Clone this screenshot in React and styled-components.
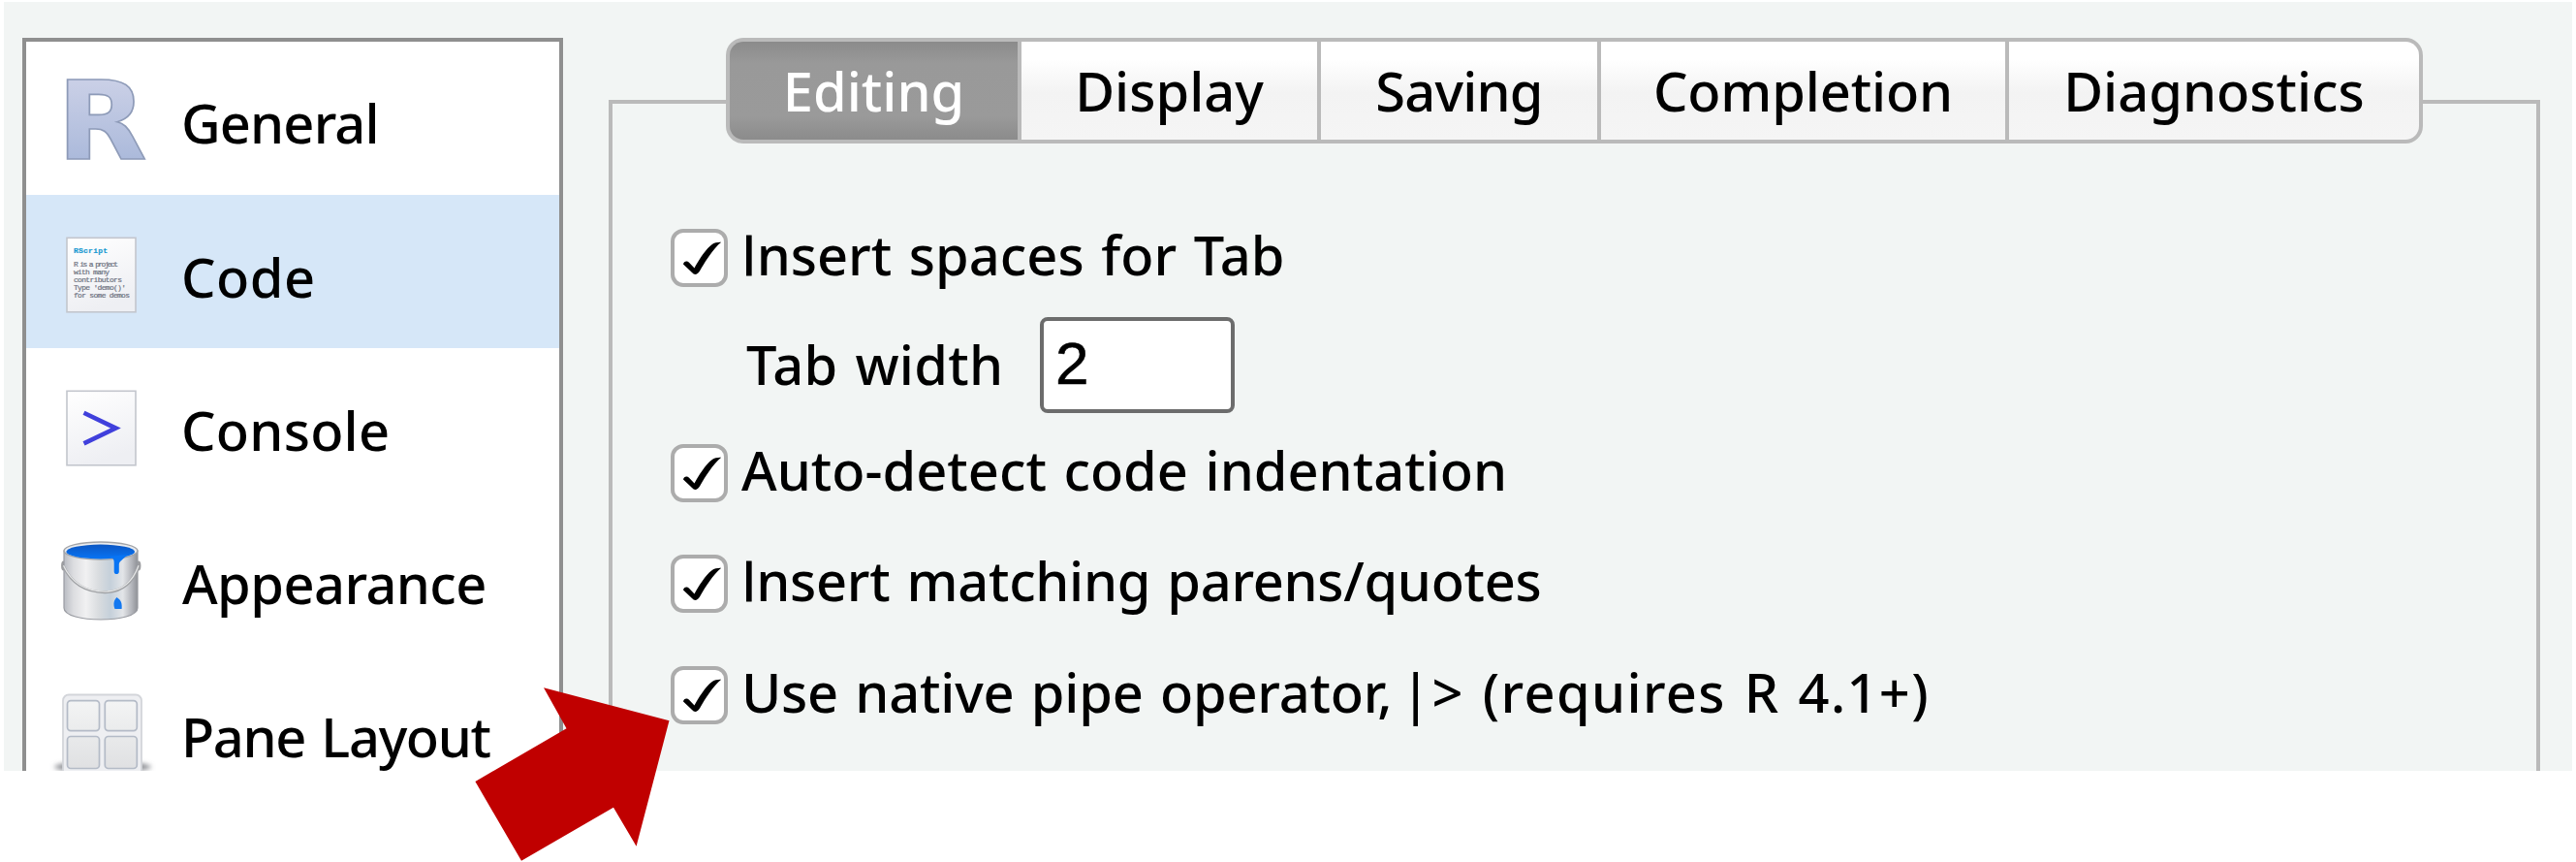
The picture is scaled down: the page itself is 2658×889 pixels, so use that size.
import React from 'react';
import styled, { createGlobalStyle, css } from 'styled-components';

const GlobalStyle = createGlobalStyle`
  * { box-sizing: border-box; }
  body { margin: 0; background: #fff; }
`;

const uiFont = css`
  font-family: 'Noto Sans', 'Open Sans', sans-serif;
  font-size: 56px;
  font-weight: 500;
  line-height: 60px;
  white-space: nowrap;
`;

const Page = styled.main`
  position: relative;
  width: 2658px;
  height: 889px;
  padding: 2px 4px 0;
  overflow: hidden;
  color: #000;
  ${uiFont}
`;

const Dialog = styled.div`
  display: flex;
  align-items: flex-start;
  width: 2650px;
  height: 793px;
  padding: 37px 33px 0 19px;
  background: #f2f5f4;
  overflow: hidden;
`;

const Sidebar = styled.nav`
  flex: none;
  width: 558px;
  height: 900px;
  border: 4px solid #8f8f8f;
  background: #fff;
`;

const SidebarItem = styled.div`
  display: flex;
  align-items: center;
  height: 158.2px;
  background: ${(p) => (p.$selected ? '#d6e7f8' : 'transparent')};

  svg {
    flex: none;
    display: block;
    width: 158px;
    height: 158.2px;
  }
`;

const Label = styled.span`
  letter-spacing: ${(p) => p.$track || 0}px;
  word-spacing: 3px;
`;

const PlainCapital = styled.span`
  font-family: 'Open Sans', sans-serif;
  line-height: 0;
  -webkit-text-stroke: 1px currentColor;
`;

const Syntax = styled.span`
  margin-left: -10px;
  letter-spacing: 1.35px;
`;

const SidebarLabel = styled(Label)`
  padding: 8.5px 0 0 ${(p) => p.$indent}px;
`;

const Content = styled.section`
  flex: 1;
  margin-left: 47px;
`;

const TabBar = styled.div`
  position: relative;
  z-index: 1;
  display: flex;
  width: 1751px;
  height: 109px;
  margin-left: 121px;
  border: 4px solid #bababa;
  border-radius: 18px;
  overflow: hidden;
  background: #bababa;
`;

const Tab = styled.div`
  display: flex;
  align-items: center;
  justify-content: center;
  width: ${(p) => p.$width}px;
  padding-bottom: 2px;
  border-right: 4px solid #bababa;
  color: ${(p) => (p.$active ? '#fff' : '#000')};
  background: ${(p) =>
    p.$active
      ? 'linear-gradient(#8b8b8b, #999 22%, #9a9a9a 76%, #8b8b8b)'
      : 'linear-gradient(#fff 18%, #f3f3f3 52%, #f5f5f5)'};

  &:last-child { border-right: 0; }
`;

const Panel = styled.div`
  display: flex;
  flex-direction: column;
  align-items: flex-start;
  width: 1993px;
  height: 900px;
  margin-top: -45px;
  padding: 128.5px 0 0 60px;
  border: 4px solid #bababa;
`;

const Option = styled.label`
  display: flex;
  align-items: center;
  gap: 14px;
  height: 60px;
  margin-bottom: ${(p) => p.$after}px;
`;

const OptionLabel = styled(Label)`
  margin-top: -8px;
`;

const CheckBox = styled.span`
  flex: none;
  width: 59px;
  height: 60px;
  border: 4px solid #acacac;
  border-radius: 13px;
  background: #fff;

  svg { display: block; margin: -4px; }
`;

const FieldRow = styled.div`
  display: flex;
  align-items: center;
  height: 99px;
  margin-bottom: 31.5px;
  padding-left: 78px;
`;

const FieldLabel = styled(Label)`
  width: 303px;
  margin-top: -4px;
`;

const NumberField = styled.input`
  width: 201px;
  height: 99px;
  padding: 0 0 4px 12px;
  border: 4px solid #6c6c6c;
  border-radius: 8px;
  background: #fff;
  color: #000;
  font: 62px 'Liberation Sans', Arial, sans-serif;
  outline: none;
  -webkit-text-stroke: 0.6px currentColor;
`;

const Pointer = styled.svg`
  position: absolute;
  left: 490px;
  top: 709px;
`;

const LogoIcon = () => (
  <svg viewBox="0 0 158 158.2">
    <defs>
      <linearGradient id="logoFill" x1="0" y1="0" x2="0" y2="1">
        <stop offset="0.2" stopColor="#c9cfe6" />
        <stop offset="0.85" stopColor="#a9b8da" />
      </linearGradient>
    </defs>
    <text
      transform="translate(31.5 121) scale(1.08 1)"
      fontFamily="DejaVu Sans"
      fontWeight="700"
      fontSize="112"
      fill="url(#logoFill)"
      stroke="#8e9bb8"
      strokeWidth="1.6"
    >
      R
    </text>
  </svg>
);

const Sheet = ({ id }) => (
  <>
    <defs>
      <linearGradient id={id} x1="0" y1="0" x2="0.3" y2="1">
        <stop offset="0" stopColor="#ffffff" />
        <stop offset="1" stopColor="#eeeff3" />
      </linearGradient>
    </defs>
    <rect x="42" y="44.3" width="71" height="76.5" fill={`url(#${id})`} stroke="#c3c6cd" strokeWidth="1.6" />
  </>
);

const CodeIcon = () => (
  <svg viewBox="0 0 158 158.2">
    <Sheet id="codeSheet" />
    <g fontFamily="Liberation Mono" fontWeight="400" fontSize="8" letterSpacing="0" fill="#6d7180" stroke="#6d7180" strokeWidth="0.2">
      <text x="49" y="60" fill="#1b9ad2" stroke="#1b9ad2" fontWeight="700" textLength="35">RScript</text>
      <text x="49" y="74" textLength="46">R is a project</text>
      <text x="49" y="82" textLength="37">with many</text>
      <text x="49" y="90" textLength="50">contributors</text>
      <text x="49" y="98" textLength="54">Type 'demo()'</text>
      <text x="49" y="106" textLength="58">for some demos</text>
    </g>
  </svg>
);

const ConsoleIcon = () => (
  <svg viewBox="0 0 158 158.2">
    <Sheet id="consoleSheet" />
    <path d="M59.5 66.8 92.5 82.6 59.5 98.4" fill="none" stroke="#4040dc" strokeWidth="4.6" />
  </svg>
);

const BucketIcon = () => (
  <svg viewBox="0 0 158 158.2">
    <defs>
      <linearGradient id="metal">
        <stop offset="0" stopColor="#b9bcc3" />
        <stop offset="0.13" stopColor="#dcdde0" />
        <stop offset="0.3" stopColor="#f1f1f2" />
        <stop offset="0.47" stopColor="#d9dcdf" />
        <stop offset="0.63" stopColor="#c5d0da" />
        <stop offset="0.8" stopColor="#e3e5e8" />
        <stop offset="0.92" stopColor="#b3b5bb" />
        <stop offset="1" stopColor="#8f9196" />
      </linearGradient>
      <linearGradient id="paint" x1="0" y1="0" x2="0" y2="1">
        <stop offset="0" stopColor="#0b57c4" />
        <stop offset="1" stopColor="#0874f4" />
      </linearGradient>
    </defs>
    <ellipse cx="38.5" cy="65.5" rx="2.4" ry="5" fill="#9c9da0" />
    <ellipse cx="116" cy="65.5" rx="2.4" ry="5" fill="#9c9da0" />
    <path d="M39 50V109C39 125 115 125 115 109V50Z" fill="url(#metal)" stroke="#9a9ca2" strokeWidth="1.2" />
    <ellipse cx="77" cy="50" rx="38" ry="9" fill="#e9ebee" stroke="#a2a4a8" strokeWidth="1.4" />
    <ellipse cx="76.7" cy="51" rx="35.4" ry="7.4" fill="url(#paint)" />
    <path d="M85 56C90 57 90.7 59 90.7 63V71.5C90.7 75 95.8 75 95.8 71.5V64C96 60 101 59 104 54Z" fill="#0874f4" />
    <path d="M93.5 98C98 101 99 104 98.6 110H91.5C89.5 105 90.5 101 93.5 98Z" fill="#1478f0" />
    <path d="M38.5 66C48 86 64 93.5 84 92.7C101 91.5 111 80 116 66" fill="none" stroke="#9fa1a4" strokeWidth="2.8" />
    <path d="M38.5 65.3C48 85.3 64 92.8 84 92C101 90.8 111 79.3 116 65.3" fill="none" stroke="#e4e5e6" strokeWidth="1.3" />
  </svg>
);

const PanesIcon = () => (
  <svg viewBox="0 0 158 158.2">
    <defs>
      <filter id="soft" x="-20%" y="-80%" width="140%" height="260%">
        <feGaussianBlur stdDeviation="2.4" />
      </filter>
      <linearGradient id="paneFill" gradientUnits="userSpaceOnUse" x1="0" y1="44" x2="0" y2="118">
        <stop offset="0" stopColor="#f4f5f5" />
        <stop offset="1" stopColor="#dfe0e2" />
      </linearGradient>
    </defs>
    <ellipse cx="79" cy="115" rx="50" ry="5.5" fill="#85878d" filter="url(#soft)" />
    <rect x="38" y="40.5" width="81" height="86" rx="6" fill="#eeeff2" stroke="#d3d5da" strokeWidth="1.8" />
    <g fill="url(#paneFill)" stroke="#b4bbc7" strokeWidth="1.7">
      <rect x="42.5" y="46.6" width="33" height="31" rx="3.5" />
      <rect x="81.3" y="46.6" width="33" height="31" rx="3.5" />
      <rect x="42.5" y="83.5" width="33" height="33" rx="3.5" />
      <rect x="81.3" y="83.5" width="33" height="33" rx="3.5" />
    </g>
  </svg>
);

const sections = [
  { name: 'General', Icon: LogoIcon, track: -0.87, indent: 2 },
  { name: 'Code', Icon: CodeIcon, track: 0.5, indent: 2, selected: true },
  { name: 'Console', Icon: ConsoleIcon, track: 0.26, indent: 2 },
  { name: 'Appearance', Icon: BucketIcon, track: -0.58, indent: 3 },
  { name: 'Pane Layout', Icon: PanesIcon, track: -1.33, indent: 2 },
];

const tabs = [
  { name: 'Editing', width: 301, track: 0, active: true },
  { name: 'Display', width: 309, track: 0 },
  { name: 'Saving', width: 289, track: -0.82 },
  { name: 'Completion', width: 421, track: -0.15 },
  { name: 'Diagnostics', width: 423, track: 0 },
];

const CheckOption = ({ children, after, track }) => (
  <Option $after={after}>
    <CheckBox>
      <svg width="59" height="60" viewBox="0 0 59 60">
        <path d="M13 36.500C13.500 33 17.500 32.600 19.500 35.200L24.500 40.500C28.500 33 36 21 42.500 16.200C45 14.300 49 13.600 52.200 13.800C44 20.500 36 33 30 43.500C27.500 47.500 24.500 48 22 45Z" />
      </svg>
    </CheckBox>
    <OptionLabel $track={track}>{children}</OptionLabel>
  </Option>
);

export default function App() {
  return (
    <Page>
      <GlobalStyle />
      <Dialog>
        <Sidebar>
          {sections.map(({ name, Icon, track, indent, selected }) => (
            <SidebarItem key={name} $selected={selected}>
              <Icon />
              <SidebarLabel $track={track} $indent={indent}>{name}</SidebarLabel>
            </SidebarItem>
          ))}
        </Sidebar>
        <Content>
          <TabBar>
            {tabs.map(({ name, width, track, active }) => (
              <Tab key={name} $width={width} $active={active}>
                <Label $track={track}>{name}</Label>
              </Tab>
            ))}
          </TabBar>
          <Panel>
            <CheckOption after={31.5} track={0}>
              <PlainCapital>I</PlainCapital>nsert spaces for Tab
            </CheckOption>
            <FieldRow>
              <FieldLabel $track={0.27}>Tab width</FieldLabel>
              <NumberField defaultValue="2" />
            </FieldRow>
            <CheckOption after={54.5} track={0}>Auto-detect code indentation</CheckOption>
            <CheckOption after={54.5} track={-0.32}>
              <PlainCapital>I</PlainCapital>nsert matching parens/quotes
            </CheckOption>
            <CheckOption after={0} track={-0.22}>
              Use native pipe operator,<Syntax>{' |> (requires R 4.1+)'}</Syntax>
            </CheckOption>
          </Panel>
        </Content>
      </Dialog>
      <Pointer width="201" height="180" viewBox="0 0 201 180">
        <path d="M71 .3 200.500 34.300 166.600 163.700 143 123.700 48 178.700 .4 97 94.500 42.300Z" fill="#c00000" />
      </Pointer>
    </Page>
  );
}
